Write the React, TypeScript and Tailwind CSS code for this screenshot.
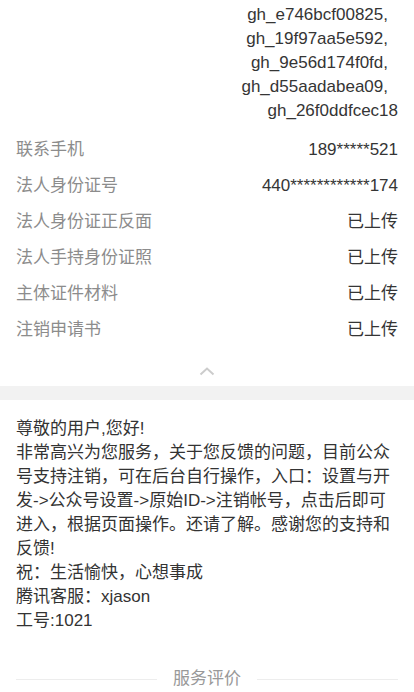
const ghIds = [
  'gh_e746bcf00825,',
  'gh_19f97aa5e592,',
  'gh_9e56d174f0fd,',
  'gh_d55aadabea09,',
  'gh_26f0ddfcec18',
];

const rows = [
  { label: '联系手机', value: '189*****521' },
  { label: '法人身份证号', value: '440************174' },
  { label: '法人身份证正反面', value: '已上传' },
  { label: '法人手持身份证照', value: '已上传' },
  { label: '主体证件材料', value: '已上传' },
  { label: '注销申请书', value: '已上传' },
];

const reply = [
  '尊敬的用户,您好!',
  '非常高兴为您服务，关于您反馈的问题，目前公众号支持注销，可在后台自行操作，入口：设置与开发->公众号设置->原始ID->注销帐号，点击后即可进入，根据页面操作。还请了解。感谢您的支持和反馈!',
  '祝：生活愉快，心想事成',
  '腾讯客服：xjason',
  '工号:1021',
];

export default function App() {
  return (
    <div className="w-[414px] h-[692px] overflow-hidden bg-white font-['Liberation_Sans','Noto_Sans_CJK_SC',sans-serif] text-[17px]">
      <div className="px-4 pt-[3px]">
        <div className="flex flex-col items-end text-[#353535] leading-[24px]">
          {ghIds.map((id, i) => (
            <div key={i} className={id.endsWith(',') ? 'pr-[10px]' : ''}>
              {id}
            </div>
          ))}
        </div>

        <div className="mt-[9px]">
          {rows.map((row) => (
            <div key={row.label} className="flex justify-between items-center h-[36px] leading-[24px]">
              <span className="text-[#8c8c8c]">{row.label}</span>
              <span className="text-[#353535]">{row.value}</span>
            </div>
          ))}
        </div>

        <div className="flex justify-center pt-[19px] pb-[10px]">
          <svg width="16" height="9" viewBox="0 0 16 9" fill="none">
            <path d="M1.5 7.5 L8 1.5 L14.5 7.5" stroke="#cccccc" strokeWidth="2" />
          </svg>
        </div>
      </div>

      <div className="h-[14px] bg-[#f2f2f2]" />

      <div className="px-4 pt-[17px] text-[#333333] leading-[24px]">
        {reply.map((line, i) => (
          <p key={i}>{line}</p>
        ))}
      </div>

      <div className="flex items-center px-4 mt-[34px] leading-[24px]">
        <div className="flex-1 h-px bg-[#ededed]" />
        <span className="px-[16px] text-[#999999]">服务评价</span>
        <div className="flex-1 h-px bg-[#ededed]" />
      </div>
    </div>
  );
}
